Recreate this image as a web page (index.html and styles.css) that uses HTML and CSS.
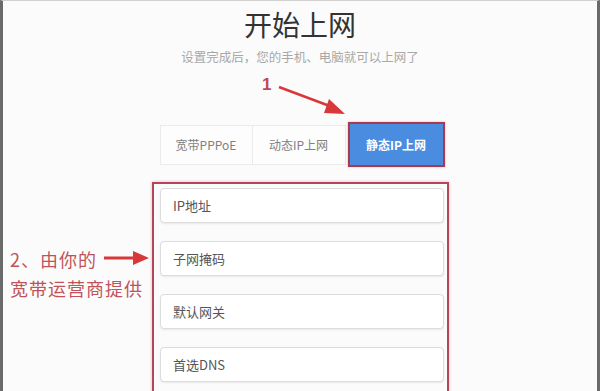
FILE: index.html
```html
<!DOCTYPE html>
<html lang="zh-CN">
<head>
  <meta charset="UTF-8" />
  <meta name="viewport" content="width=device-width, initial-scale=1.0"/>
  <title>开始上网</title>
  <link rel="stylesheet" href="styles.css">
</head>
<body>
  <div class="frame">
    <div class="main">
      <h1 class="title">开始上网</h1>
      <p class="sub">设置完成后，您的手机、电脑就可以上网了</p>

      <div class="tabs">
        <div class="tab">宽带PPPoE</div>
        <div class="tab">动态IP上网</div>
        <div class="tab active">静态IP上网</div>
      </div>

      <form class="static-form">
        <input type="text" placeholder="IP地址">
        <input type="text" placeholder="子网掩码">
        <input type="text" placeholder="默认网关">
        <input type="text" placeholder="首选DNS">
      </form>
    </div>

    <!-- annotations drawn over the screenshot -->
    <div class="mark mark-1">1</div>
    <svg class="arrow arrow-1" width="80" height="40" viewBox="0 0 80 40">
      <path d="M2 3 L58 24" stroke="#d8383a" stroke-width="2.5" fill="none"/>
      <path d="M52 15 L68 30 L47 29 Z" fill="#d8383a"/>
    </svg>

    <div class="mark mark-2">2、由你的<br>宽带运营商提供</div>
    <svg class="arrow arrow-2" width="50" height="16" viewBox="0 0 50 16">
      <path d="M1 8 L34 8" stroke="#d8383a" stroke-width="3" fill="none"/>
      <path d="M30 1 L46 8 L30 15 Z" fill="#d8383a"/>
    </svg>
  </div>
</body>
</html>
```

FILE: styles.css
```css
body {
  margin: 0;
  background: #fff;
  font-family: "Noto Sans CJK SC", "Noto Sans", sans-serif;
}

.frame {
  position: relative;
  width: 600px;
  height: 391px;
  box-sizing: border-box;
  border-top: 1px solid #d0d0d0;
  border-left: 3px solid #6a6a6a;
  border-right: 3px solid #6a6a6a;
  margin-left: 0;
  background: #fbfbfb;
  overflow: hidden;
}

.main {
  display: flex;
  flex-direction: column;
  align-items: center;
}

.title {
  margin: 5px 0 0 0;
  font-size: 28px;
  line-height: 36px;
  font-weight: normal;
  color: #333;
}

.sub {
  margin: 7px 0 0 0;
  font-size: 12.5px;
  line-height: 16px;
  color: #a8a8a8;
}

.tabs {
  display: flex;
  align-items: center;
  margin-top: 57px;
  margin-left: 4px;
}

.tab {
  width: 93px;
  height: 40px;
  box-sizing: border-box;
  border: 1px solid #ebebeb;
  background: #fdfdfd;
  display: flex;
  justify-content: center;
  align-items: center;
  font-size: 12px;
  color: #808080;
}

.tab + .tab {
  border-left: none;
}

.tab.active {
  width: 97px;
  height: 45px;
  margin-left: 2px;
  border: 2px solid #a53a50;
  background: #4a8de0;
  color: #fff;
  font-weight: bold;
  box-shadow: 0 0 2px #e8a0a8;
}

.static-form {
  margin: 15px 0 0 1px;
  width: 297px;
  box-sizing: border-box;
  border: 2px solid #b3475a;
  border-bottom: none;
  box-shadow: 0 0 3px #f2b4b8;
  padding: 4px 4px 0 6px;
  display: flex;
  flex-direction: column;
  gap: 18px;
  height: 220px;
}

.static-form input {
  height: 35px;
  width: 284px;
  box-sizing: border-box;
  border: 1px solid #dcdcdc;
  border-radius: 4px;
  box-shadow: 0 1px 2px rgba(0, 0, 0, 0.08);
  padding: 0 12px;
  background: #fff;
  font-family: "Noto Sans CJK SC", "Noto Sans", sans-serif;
  font-size: 13px;
  color: #555;
}

.static-form input::placeholder {
  color: #555;
}

.mark {
  position: absolute;
  color: #b94a55;
}

.mark-1 {
  left: 259px;
  top: 74px;
  font-size: 17px;
  font-weight: bold;
  font-family: "Liberation Sans", sans-serif;
}

.mark-2 {
  left: 7px;
  top: 244px;
  font-size: 18px;
  line-height: 29px;
  letter-spacing: 1px;
  color: #c0535a;
}

.arrow {
  position: absolute;
}

.arrow-1 {
  left: 274px;
  top: 83px;
}

.arrow-2 {
  left: 100px;
  top: 249px;
}
```
